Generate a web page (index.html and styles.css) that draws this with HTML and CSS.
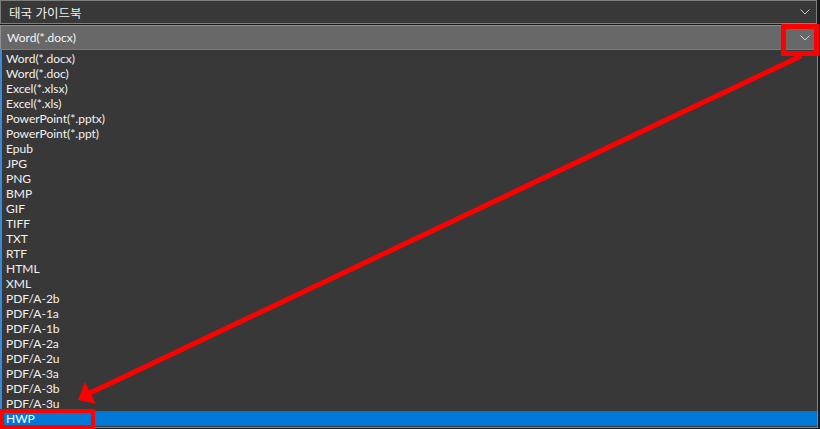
FILE: index.html
```html
<!DOCTYPE html>
<html lang="ko">
<head>
<meta charset="utf-8">
<link rel="stylesheet" href="styles.css">
</head>
<body>
<div class="screen">
  <div class="combo combo-top">
    <span class="combo-text ko">태국 가이드북</span>
    <svg class="chev" width="10" height="6" viewBox="0 0 10 6"><polyline points="0.5,0.5 5,5 9.5,0.5" fill="none" stroke="#c8c8c8" stroke-width="1"/></svg>
  </div>
  <div class="combo combo-sel">
    <span class="combo-text">Word(*.docx)</span>
    <svg class="chev" width="10" height="6" viewBox="0 0 10 6"><polyline points="0.5,0.5 5,5 9.5,0.5" fill="none" stroke="#d0d0d0" stroke-width="1"/></svg>
  </div>
  <ul class="list">
    <li>Word(*.docx)</li>
    <li>Word(*.doc)</li>
    <li>Excel(*.xlsx)</li>
    <li>Excel(*.xls)</li>
    <li>PowerPoint(*.pptx)</li>
    <li>PowerPoint(*.ppt)</li>
    <li>Epub</li>
    <li>JPG</li>
    <li>PNG</li>
    <li>BMP</li>
    <li>GIF</li>
    <li>TIFF</li>
    <li>TXT</li>
    <li>RTF</li>
    <li>HTML</li>
    <li>XML</li>
    <li>PDF/A-2b</li>
    <li>PDF/A-1a</li>
    <li>PDF/A-1b</li>
    <li>PDF/A-2a</li>
    <li>PDF/A-2u</li>
    <li>PDF/A-3a</li>
    <li>PDF/A-3b</li>
    <li>PDF/A-3u</li>
    <li class="selected">HWP</li>
  </ul>
  <svg class="annot" width="820" height="429" viewBox="0 0 820 429">
    <rect x="783.5" y="26.5" width="33" height="27" fill="none" stroke="#ff0000" stroke-width="5"/>
    <rect x="2" y="411" width="91" height="16" fill="none" stroke="#ff0000" stroke-width="4"/>
    <line x1="801" y1="56" x2="90" y2="393" stroke="#ff0000" stroke-width="5"/>
    <polygon points="78,400 85,382 96,404" fill="#ff0000"/>
  </svg>
</div>
</body>
</html>
```

FILE: styles.css
```css
* { box-sizing: border-box; }
html, body {
  margin: 0;
  padding: 0;
  background: #1a1a1a;
}
.screen {
  position: relative;
  width: 820px;
  height: 429px;
  overflow: hidden;
  display: flex;
  flex-direction: column;
  font-family: Lato, "Noto Sans", "Noto Sans CJK KR", sans-serif;
  font-size: 12px;
  color: #ffffff;
}
.combo {
  width: 817px;
  display: flex;
  align-items: center;
  justify-content: space-between;
  padding: 0 6px 0 6px;
}
.combo-top {
  height: 24px;
  background: #383838;
  border: 1px solid #7d7d7d;
  margin-bottom: 1px;
}
.combo-top .combo-text {
  padding-left: 2px;
  font-family: "Noto Sans CJK KR", "Noto Sans", sans-serif;
  font-size: 12.5px;
  line-height: 15px;
  color: #f0f0f0;
}
.combo-sel {
  height: 24px;
  background: #686868;
  border: 1px solid #8e8e8e;
  border-bottom: none;
}
.combo-sel .combo-text {
  padding-left: 0;
  font-size: 12px;
  color: #f4f4f4;
}
.chev { flex: none; }
.list {
  list-style: none;
  margin: 0;
  padding: 1px 0 0 0;
  width: 818px;
  height: 379px;
  background: #383838;
  border: 1px solid #5a8fc0;
  border-top: 1px solid #4a86c6;
  border-left: 2px solid #3a8ad8;
}
.list li {
  height: 15px;
  line-height: 15px;
  padding-left: 4px;
  white-space: nowrap;
  font-size: 12px;
  color: #f2f2f2;
}
.list li.selected {
  background: #0078d7;
  color: #ffffff;
}
.annot {
  position: absolute;
  left: 0;
  top: 0;
  pointer-events: none;
}
```
